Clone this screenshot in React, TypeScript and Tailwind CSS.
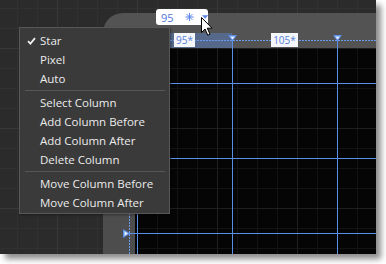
const font = { fontFamily: '"Open Sans", "Liberation Sans", sans-serif' }

type MenuEntry = { label: string; checked?: boolean } | 'sep'

const menuItems: MenuEntry[] = [
  { label: 'Star', checked: true },
  { label: 'Pixel' },
  { label: 'Auto' },
  'sep',
  { label: 'Select Column' },
  { label: 'Add Column Before' },
  { label: 'Add Column After' },
  { label: 'Delete Column' },
  'sep',
  { label: 'Move Column Before' },
  { label: 'Move Column After' },
]

// column boundaries in the designer, relative to the canvas left edge
const columnEdges = [2, 97, 202]
// row boundaries, relative to the canvas top edge
const rowEdges = [35, 110, 185]

const colClass = ['', 'border-l border-[#5b8ee6]', 'border-l border-[#5b8ee6]', 'border-l border-[#5b8ee6]']
const rowClass = ['', 'border-t border-[#5b8ee6]', 'border-t border-[#5b8ee6]', 'border-t border-[#5b8ee6]']

const ColumnMarker = ({ x }: { x: number }) => (
  <div className="absolute top-[22px] bottom-0 flex w-[9px] flex-col items-center" style={{ left: x - 4 }}>
    <svg width="9" height="7" viewBox="0 0 9 7" className="shrink-0">
      <polygon points="0,0 9,0 4.5,6.5" fill="#5b8ee6" />
      <polygon points="2,1.5 7,1.5 4.5,4.5" fill="#e6eeff" />
    </svg>
    <div className="-mt-[2px] w-px flex-1 bg-[#5b8ee6]" />
  </div>
)

const RowMarker = ({ y }: { y: number }) => (
  <div className="absolute left-[20px] right-0 flex h-[9px] items-center" style={{ top: y - 4 }}>
    <svg width="8" height="9" viewBox="0 0 8 9" className="shrink-0">
      <polygon points="0,0 0,9 7.5,4.5" fill="#5b8ee6" />
      <polygon points="1.5,2 1.5,7 5,4.5" fill="#e6eeff" />
    </svg>
    <div className="-ml-[2px] h-px flex-1 bg-[#5b8ee6]" />
  </div>
)

const SizeLabel = ({ text }: { text: string }) => (
  <div
    className="flex h-[14px] items-center bg-[#f5f6f9] px-[2px] text-[10px] leading-none text-[#5a80d8]"
    style={font}
  >
    {text}
  </div>
)

const ContextMenu = () => (
  <div
    className="absolute left-[19px] top-[27px] w-[151px] border border-[#585858] bg-[#3a3a3a] pt-[3px] pb-[1px] text-[11.5px] text-[#ececec] shadow-[1px_1px_2px_rgba(0,0,0,0.4)]"
    style={font}
  >
    {menuItems.map((item, i) =>
      item === 'sep' ? (
        <div key={i} className="py-[2px] pl-[5px] pr-[4px]">
          <div className="h-px bg-[#565656]" />
        </div>
      ) : (
        <div key={i} className="flex h-[19px] items-center">
          <div className="flex w-[20px] justify-center pl-[2px]">
            {item.checked && (
              <svg width="9" height="8" viewBox="0 0 9 8">
                <path d="M1 4.2 L3.4 6.6 L8 1.2" fill="none" stroke="#f0f0f0" strokeWidth="1.8" />
              </svg>
            )}
          </div>
          <span>{item.label}</span>
        </div>
      ),
    )}
  </div>
)

const SizePopup = () => (
  <div
    className="absolute left-[156px] top-[9px] flex h-[16px] w-[52px] items-center rounded-[3px] bg-white pl-[5px] text-[11px] text-[#4f74d6]"
    style={font}
  >
    <span className="leading-none">95</span>
    <svg className="ml-[11px]" width="10" height="10" viewBox="0 0 10 10">
      <g stroke="#5b86e6" strokeWidth="1.1">
        <line x1="5" y1="0.5" x2="5" y2="9.5" />
        <line x1="0.5" y1="5" x2="9.5" y2="5" />
        <line x1="1.8" y1="1.8" x2="8.2" y2="8.2" />
        <line x1="8.2" y1="1.8" x2="1.8" y2="8.2" />
      </g>
    </svg>
    <svg className="ml-[8px]" width="7" height="4" viewBox="0 0 7 4">
      <polygon points="0,0 7,0 3.5,4" fill="#5b86e6" />
    </svg>
  </div>
)

const Cursor = () => (
  <svg className="absolute left-[200px] top-[16px]" width="14" height="21" viewBox="0 0 14 21">
    <path
      d="M1.5 1.5 L1.5 16.5 L5 13 L7.8 19.2 L10 18.2 L7.3 12.2 L12 12.2 Z"
      fill="#ffffff"
      stroke="#000000"
      strokeWidth="1"
      strokeLinejoin="round"
    />
  </svg>
)

export default function App() {
  return (
    <div className="h-[264px] w-[386px] bg-white">
      <div className="relative h-[254px] w-[376px] overflow-hidden bg-[#2b2b2b] bg-[linear-gradient(to_right,#383838_1px,transparent_1px),linear-gradient(to_bottom,#383838_1px,transparent_1px),linear-gradient(to_right,#313131_1px,transparent_1px),linear-gradient(to_bottom,#313131_1px,transparent_1px)] shadow-[5px_5px_6px_rgba(0,0,0,0.45)] [background-position:57px_48px,57px_48px,17px_8px,17px_8px] [background-size:80px_80px,80px_80px,20px_20px,20px_20px]">
        {/* designer surface */}
        <div className="ml-[103px] mt-[13px] flex h-[241px] w-[273px] overflow-hidden rounded-tl-[20px] bg-[#535353]">
          {/* left ruler */}
          <div className="flex w-[32px] shrink-0 flex-col">
            <div className="h-[35px] shrink-0" />
            <div className="relative flex-1 bg-[#4d4d4d]">
              <div className="absolute left-[26px] top-0 bottom-0 w-px bg-[repeating-linear-gradient(180deg,#6a9af0_0px,#6a9af0_2px,transparent_2px,transparent_3px)]" />
              {rowEdges.map((y) => (
                <RowMarker key={y} y={y} />
              ))}
            </div>
          </div>

          <div className="flex flex-1 flex-col">
            {/* top ruler */}
            <div className="relative flex h-[35px] shrink-0 items-end">
              <div className="w-[2px] shrink-0" />
              <div className="flex h-[15px] w-[95px] shrink-0 justify-center bg-[#56698a]">
                <div className="relative z-10">
                  <SizeLabel text="95*" />
                </div>
              </div>
              <div className="flex h-[15px] w-[105px] shrink-0 justify-center">
                <div className="relative z-10">
                  <SizeLabel text="105*" />
                </div>
              </div>
              <div className="absolute left-[2px] right-0 top-[27px] h-px bg-[repeating-linear-gradient(90deg,#6a9af0_0px,#6a9af0_2px,transparent_2px,transparent_3px)]" />
              {columnEdges.map((x) => (
                <ColumnMarker key={x} x={x} />
              ))}
            </div>

            {/* canvas */}
            <div className="grid flex-1 grid-cols-[2px_95px_105px_1fr] grid-rows-[35px_75px_75px_1fr] bg-[#050505] bg-[linear-gradient(to_right,#1f1f1f_1px,transparent_1px),linear-gradient(to_bottom,#1f1f1f_1px,transparent_1px),linear-gradient(to_right,#131313_1px,transparent_1px),linear-gradient(to_bottom,#131313_1px,transparent_1px)] [background-position:2px_0px,2px_0px,2px_0px,2px_0px] [background-size:80px_80px,80px_80px,20px_20px,20px_20px]">
              {rowClass.map((rc, r) =>
                colClass.map((cc, c) => <div key={`${r}-${c}`} className={`${rc} ${cc}`} />),
              )}
            </div>
          </div>
        </div>

        <ContextMenu />
        <SizePopup />
        <Cursor />
      </div>
    </div>
  )
}
